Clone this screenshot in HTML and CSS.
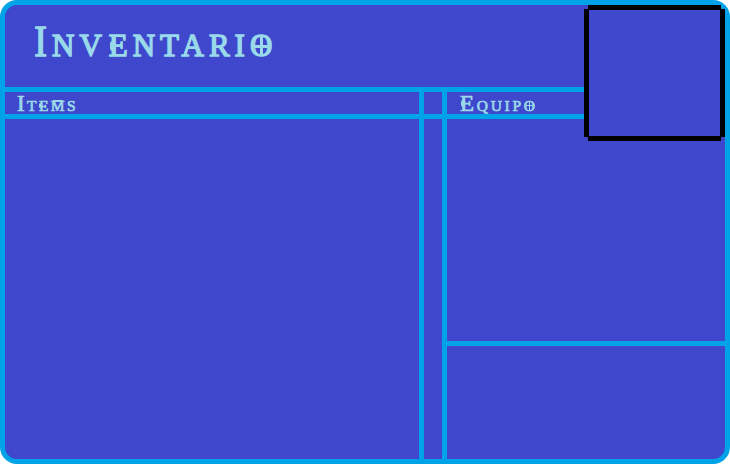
FILE: index.html
```html
<!DOCTYPE html>
<html lang="es">
<head>
<meta charset="utf-8">
<title>Inventario</title>
<link rel="stylesheet" href="styles.css">
</head>
<body>
<main class="window">
  <header class="top"><h1 class="title"><span class="initial">I</span>N<span class="wide">V</span><span class="rune-e">E</span>NTARI<span class="rune-o">O</span></h1></header>
  <div class="columns">
    <section class="items">
      <h2 class="label items-label"><span class="initial">I</span>T<span class="rune-e">E</span><span class="rune-m">M</span>S</h2>
      <div class="list"></div>
    </section>
    <div class="gutter"><div class="gutter-head"></div></div>
    <section class="equipment">
      <h2 class="label equipment-label"><span class="initial rune-e">E</span>QUIP<span class="rune-o">O</span></h2>
      <div class="slots"></div>
      <div class="details"></div>
    </section>
  </div>
  <div class="portrait"></div>
</main>
</body>
</html>
```
FILE: styles.css
```css
* { box-sizing: border-box; }
body { margin: 0; background: #fff; }
.window {
  position: relative;
  width: 730px;
  height: 464px;
  border: 5px solid #00a2e8;
  border-radius: 17px;
  background: #3f48cc;
  color: #99d9ea;
  font-family: "Liberation Serif", serif;
  display: flex;
  flex-direction: column;
}
.top { height: 87px; border-bottom: 5px solid #00a2e8; padding: 14px 0 0 28px; }
.title {
  margin: 0;
  font-size: 31px;
  line-height: 52px;
  font-weight: 400;
  letter-spacing: 5px;
  white-space: nowrap;
  -webkit-text-stroke: 1.4px #99d9ea;
}
.title .initial { display: inline-block; font-size: 45px; line-height: 1; letter-spacing: 4px; transform: scaleX(0.85); transform-origin: 40% 50%; }
.title .wide { letter-spacing: 7px; }
.columns { flex: 1; display: grid; grid-template-columns: 414px 28px 1fr; }
.items, .equipment { display: flex; flex-direction: column; }
.label {
  margin: 0;
  height: 27px;
  border-bottom: 5px solid #00a2e8;
  font-size: 15.5px;
  line-height: 22px;
  font-weight: 400;
  white-space: nowrap;
  -webkit-text-stroke: 0.7px #99d9ea;
}
.label .initial { font-size: 23px; line-height: 1; }
.items-label { padding-left: 12px; letter-spacing: 2.4px; }
.equipment-label { padding-left: 13px; letter-spacing: 2.7px; }
.list { flex: 1; }
.gutter { border: solid #00a2e8; border-width: 0 5px; }
.gutter-head { height: 27px; border-bottom: 5px solid #00a2e8; }
.slots { height: 227px; border-bottom: 5px solid #00a2e8; }
.details { flex: 1; }
.rune-e, .rune-o, .rune-m { position: relative; }
.rune-e::before {
  content: "";
  position: absolute;
  left: 0.03em;
  bottom: 0.4em;
  width: 0.18em;
  height: 0.3em;
  border-radius: 0.1em 0 0 0.1em;
  background: #99d9ea;
}
.rune-m::before {
  content: "";
  position: absolute;
  left: 0.12em;
  width: 0.64em;
  bottom: 0.8em;
  height: 0.1em;
  background: #99d9ea;
}
.rune-o::before, .rune-o::after { content: ""; position: absolute; background: #99d9ea; }
.rune-o::before { left: 0.1em; width: 0.54em; bottom: 0.5em; height: 0.09em; }
.rune-o::after { left: 0.32em; width: 0.09em; bottom: 0.24em; height: 0.6em; }
.portrait {
  position: absolute;
  left: 579px;
  top: 0;
  width: 141px;
  height: 136px;
  background:
    linear-gradient(#000, #000) 4px 0 / 133px 5px no-repeat,
    linear-gradient(#000, #000) 4px 131px / 133px 5px no-repeat,
    linear-gradient(#000, #000) 0 4px / 5px 128px no-repeat,
    linear-gradient(#000, #000) 136px 4px / 5px 128px no-repeat,
    linear-gradient(#3f48cc, #3f48cc) 5px 5px / 131px 126px no-repeat;
}
```
